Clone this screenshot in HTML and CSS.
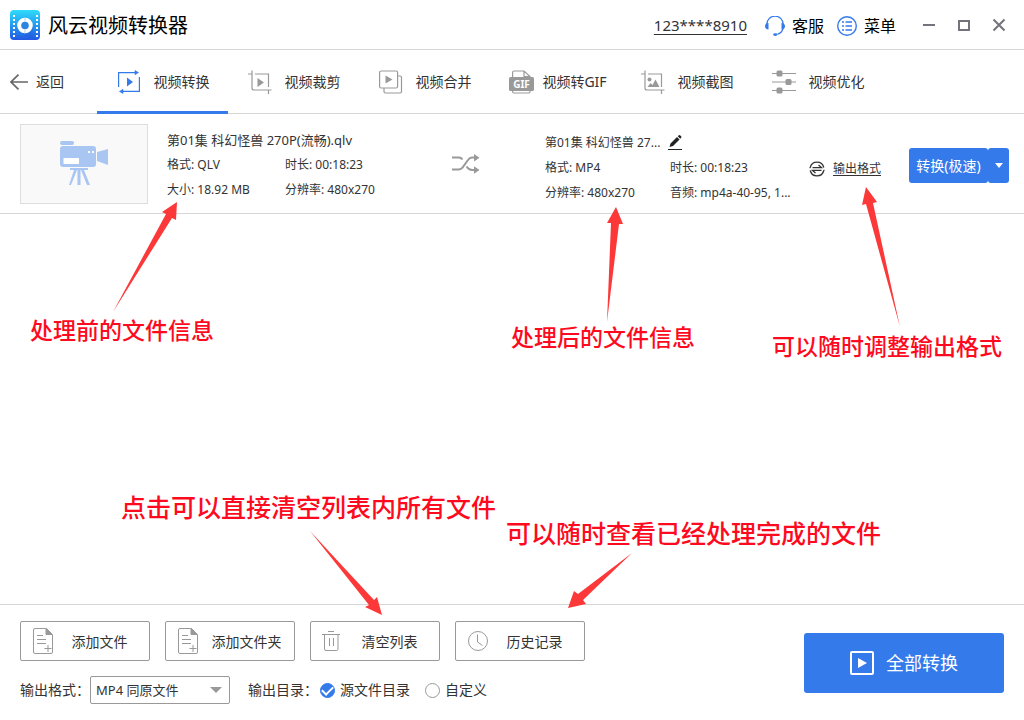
FILE: index.html
```html
<!DOCTYPE html>
<html lang="zh-CN">
<head>
<meta charset="utf-8">
<meta name="viewport" content="width=device-width, initial-scale=1">
<title>风云视频转换器</title>
<link rel="stylesheet" href="styles.css">
</head>
<body>
<div class="app">
  <header class="titlebar">
    <svg class="logo" width="30" height="30" viewBox="0 0 30 30" aria-hidden="true">
      <defs><linearGradient id="lg" x1="0" y1="0" x2="0" y2="1"><stop offset="0" stop-color="#2fdcfb"/><stop offset=".5" stop-color="#249bf0"/><stop offset="1" stop-color="#2358e2"/></linearGradient></defs>
      <rect width="30" height="30" rx="4" fill="url(#lg)"/>
      <path d="M4 5v22M27 5v22" stroke="#fff" stroke-width="2" stroke-dasharray="2 2" fill="none"/>
      <path d="M8 17l9 11h6V15z" fill="#1f5bd6" opacity=".35"/>
      <circle cx="15" cy="15.500" r="5.800" fill="#2a86e0" stroke="#fff" stroke-width="4"/>
      <path d="M15 7.500v4M15 19.500v4" stroke="#9fd2fa" stroke-width="1"/>
    </svg>
    <h1 class="brand">风云视频转换器</h1>
    <a class="phone" href="#">123****8910</a>
    <button class="head-btn" type="button">
      <svg width="20" height="20" viewBox="0 0 20 20" fill="none" stroke="#347aea" aria-hidden="true"><path d="M1.700 8.500a8.300 8.300 0 0 1 16.600 0M18 12.500c-.8 3-2.800 5-5.500 5.700" stroke-width="1.300"/><g fill="#347aea" stroke="none"><path d="M3.500 7v6.500Q0 13 0 10.200T3.500 7zM16.500 7v6.500q3.500-.5 3.500-3.300T16.500 7z"/><ellipse cx="10.300" cy="18.600" rx="2.200" ry="1.400"/></g></svg>
      客服</button>
    <button class="head-btn" type="button">
      <svg width="20" height="20" viewBox="0 0 20 20" fill="none" stroke="#347aea" aria-hidden="true"><circle cx="10" cy="10" r="9.300" stroke-width="1.400"/><path d="M5 6h2M8.500 6h6.500M5 10h2M8.500 10h6.500M5 14h2M8.500 14h6.500" stroke-width="1.700"/></svg>
      菜单</button>
    <div class="win-btns">
      <button type="button" aria-label="最小化"><svg width="14" height="14" viewBox="0 0 14 14"><path d="M1 7h12" stroke="#73737b" stroke-width="2"/></svg></button>
      <button type="button" aria-label="最大化"><svg width="14" height="14" viewBox="0 0 14 14"><rect x="2" y="3" width="10" height="9" fill="none" stroke="#73737b" stroke-width="2"/></svg></button>
      <button type="button" aria-label="关闭"><svg width="14" height="14" viewBox="0 0 14 14"><path d="M1.500 1.500l11 11M12.500 1.500l-11 11" stroke="#73737b" stroke-width="2"/></svg></button>
    </div>
  </header>

  <nav class="tabs">
    <button class="back" type="button"><svg width="18" height="16" viewBox="0 0 18 16" fill="none" stroke="#666" stroke-width="1.700" aria-hidden="true"><path d="M8.500 .7L1 8l7.500 7.300M1 8h17"/></svg>返回</button>
    <button class="tab active" type="button"><svg width="24" height="24" viewBox="0 0 24 24" fill="none" stroke="#347aea" stroke-width="1.200" aria-hidden="true"><path d="M1.600 17V2.600H18M22.400 7v14.400H6"/><path d="M18 .5l3.500 2.100L18 4.700zM6 19.300l-3.500 2.100L6 23.500z" fill="#347aea" stroke-width=".6"/><path d="M10 7.500v9l6-4.500z" fill="#347aea" stroke="none"/></svg>视频转换</button>
    <button class="tab" type="button"><svg width="24" height="24" viewBox="0 0 24 24" fill="none" stroke="#999" stroke-width="1.200" aria-hidden="true"><path d="M0 4h3.500M4 .5v17.500q0 2 2 2h17.500M7 4h13.500v13M20.500 20v4"/><path d="M9.500 8v9l6.500-4.500z" fill="#999" stroke="none"/></svg>视频裁剪</button>
    <button class="tab" type="button"><svg width="24" height="24" viewBox="0 0 24 24" fill="none" stroke="#999" stroke-width="1.200" aria-hidden="true"><rect x=".6" y="1" width="18" height="17" rx="1.500"/><path d="M19 6h2q1.500 0 1.500 1.500v14q0 1.500-1.500 1.500H6.500Q5 23 5 21.500V18"/><path d="M6.500 5.500v8l7-4z" fill="#999" stroke="none"/></svg>视频合并</button>
    <button class="tab tight" type="button"><svg width="25" height="24" viewBox="0 0 25 24" aria-hidden="true"><path d="M3.600 7V2.500Q3.600 1 5 1h10l6 5.500V8M15 1v5.500h6M3.600 19v2.500Q3.600 23 5 23h14.600q1.400 0 1.400-1.500V19" fill="none" stroke="#999" stroke-width="1.200"/><rect y="7" width="25" height="14" rx="1.500" fill="#999"/><text class="gif" x="12.500" y="18" text-anchor="middle">GIF</text></svg>视频转GIF</button>
    <button class="tab" type="button"><svg width="24" height="24" viewBox="0 0 24 24" fill="none" stroke="#999" stroke-width="1.200" aria-hidden="true"><path d="M0 4h3.500M4 .5v17.500q0 2 2 2h17.500M7 4h13.500v13M20.500 20v4"/><circle cx="8.500" cy="9.500" r="2" fill="#999" stroke="none"/><path d="M6.500 17l3-4 2 2 3-5.500 4 7.500z" fill="#999" stroke="none"/></svg>视频截图</button>
    <button class="tab" type="button"><svg width="24" height="24" viewBox="0 0 24 24" fill="none" stroke="#999" stroke-width="1.200" aria-hidden="true"><path d="M0 3.500h24M0 12h24M0 20.500h24"/><g fill="#999" stroke="none"><rect x="4.500" y=".5" width="6" height="6" rx="1.500"/><rect x="13.500" y="9" width="6" height="6" rx="1.500"/><rect x="4.500" y="17.500" width="6" height="6" rx="1.500"/></g></svg>视频优化</button>
  </nav>

  <main class="stage">
    <article class="file">
      <div class="thumb"><svg width="48" height="46" viewBox="0 0 48 46" fill="#a9c6f3" aria-hidden="true"><rect x="0" y="0" width="14" height="4" rx="2"/><rect x="0" y="5" width="36" height="21" rx="3"/><path d="M37 11l11-3v16l-11-4zM10 27h18v2H10zM17.500 29h3v15h-3zM14 29h3L11 44H9zM21 29h3l6 15h-3z"/><rect x="3.500" y="17" width="15.500" height="6" rx=".5" fill="#fff"/><path d="M28 10h2v2h-2zM32 10h2v2h-2z" fill="#fff"/></svg></div>
      <div class="info source">
        <h2 class="name">第01集 科幻怪兽 270P(流畅).qlv</h2>
        <span>格式: QLV</span><span>时长: 00:18:23</span>
        <span>大小: 18.92 MB</span><span>分辨率: 480x270</span>
      </div>
      <div class="shuffle"><svg width="28" height="20" viewBox="0 0 28 20" fill="none" stroke="#999" stroke-width="2" aria-hidden="true"><path d="M0 3.500h7q2 0 3.500 2M0 15.500h7q2 0 3.500-1.800L16 6q1.700-2.500 4-2.500h3M14.500 12.500Q17 16 20 16h3"/><path d="M22 0l5.500 3.700L22 7.400zM22 12.300l5.500 3.700L22 19.700z" fill="#999" stroke="none"/></svg></div>
      <div class="info target">
        <div class="name"><h2>第01集 科幻怪兽 27...</h2><button type="button" aria-label="重命名"><svg width="14" height="15" viewBox="0 0 14 15" aria-hidden="true"><path d="M0 14.500h14" stroke="#222"/><path d="M1.500 12l1-3.500L9 2l2.500 2.500L5 11zM9.800 1.200l1-1q.8-.4 1.500.3l.8.8q.7.7 0 1.400l-.9 1z" fill="#222"/></svg></button></div>
        <span>格式: MP4</span><span>时长: 00:18:23</span>
        <span>分辨率: 480x270</span><span>音频: mp4a-40-95, 1...</span>
      </div>
      <a class="output" href="#"><svg width="16" height="16" viewBox="0 0 16 16" fill="none" stroke="#333" stroke-width="1.300" aria-hidden="true"><path d="M1.200 6.500a7 7 0 0 1 13.600 0M14.800 9.500a7 7 0 0 1-13.600 0M3.500 6.600h9L9.500 4M.5 6.600h1M15.500 9.400h-1M12.500 9.400h-9l3 2.600"/></svg><span>输出格式</span></a>
      <div class="split"><button type="button">转换(极速)</button><button class="more" type="button" aria-label="更多"><svg width="8" height="5" viewBox="0 0 8 5"><path d="M0 0h8L4 5z" fill="#fff"/></svg></button></div>
    </article>
  </main>

  <footer class="footer">
    <div class="controls">
      <div class="actions">
        <button type="button"><svg width="22" height="28" viewBox="0 0 22 28" fill="none" stroke="#999" aria-hidden="true"><path d="M13.500 1.500H3q-1.500 0-1.500 1.500v22q0 1.500 1.500 1.500h16q1.500 0 1.500-1.500V8" /><path d="M14 1v6.500h6.500z" fill="#999"/><path d="M5 8.500h6M5 12.500h9M5 16.500h9M16 18v7M12.500 21.500h7"/></svg><span>添加文件</span></button>
        <button class="wide" type="button"><svg width="22" height="28" viewBox="0 0 22 28" fill="none" stroke="#999" aria-hidden="true"><path d="M13.500 1.500H3q-1.500 0-1.500 1.500v22q0 1.500 1.500 1.500h16q1.500 0 1.500-1.500V8" /><path d="M14 1v6.500h6.500z" fill="#999"/><path d="M5 8.500h6M5 12.500h9M5 16.500h9M16 18v7M12.500 21.500h7"/></svg><span>添加文件夹</span></button>
        <button type="button"><svg width="22" height="22" viewBox="0 0 22 22" fill="none" stroke="#999" aria-hidden="true"><path d="M6 1.500h6M0 4.500h18M2.500 5v14q0 1.500 1.500 1.500h10.500q1.500 0 1.500-1.500V5M7.500 8v8M11.500 8v8"/></svg><span>清空列表</span></button>
        <button type="button"><svg width="22" height="22" viewBox="0 0 22 22" fill="none" stroke="#999" aria-hidden="true"><circle cx="11" cy="11" r="9.500"/><path d="M10.500 4.500v7.500l5 3.500"/></svg><span>历史记录</span></button>
      </div>
      <div class="options">
        <label for="fmt">输出格式：</label>
        <div class="select"><select id="fmt"><option>MP4 同原文件</option></select><svg width="12" height="6" viewBox="0 0 12 6" aria-hidden="true"><path d="M0 0h12L6 6z" fill="#999"/></svg></div>
        <span class="dir">输出目录：</span>
        <label class="radio"><input type="radio" name="dir" checked>源文件目录</label>
        <label class="radio"><input type="radio" name="dir">自定义</label>
      </div>
    </div>
    <button class="convert-all" type="button"><svg width="24" height="24" viewBox="0 0 24 24" aria-hidden="true"><rect x="1" y="1" width="22" height="22" rx="1" fill="none" stroke="#fff" stroke-width="2"/><path d="M8 7v10l9-5z" fill="#fff"/></svg>全部转换</button>
  </footer>

  <div class="notes">
    <svg class="arrows" aria-hidden="true"><g fill="#fc3838">
      <path d="M113 312L166 214 162 212 177 202 176 220 172 218z"/>
      <path d="M607 322L611 223 607 223 616 207 623 224 619 224z"/>
      <path d="M900 327L866 204 862 205 866 187 877 202 873 203z"/>
      <path d="M310 531L369 605 365 607 382 615 377 597 374 600z"/>
      <path d="M632 553L578 594 574 591 568 608 586 604 583 600z"/>
    </g></svg>
    <p class="note n1">处理前的文件信息</p>
    <p class="note n2">处理后的文件信息</p>
    <p class="note n3">可以随时调整输出格式</p>
    <p class="note large n4">点击可以直接清空列表内所有文件</p>
    <p class="note large n5">可以随时查看已经处理完成的文件</p>
  </div>
</div>
</body>
</html>
```
FILE: styles.css
```css
* { box-sizing: border-box; }
body, h1, h2, p { margin: 0; font-weight: 400; }
body, button, select {
  font-family: "Noto Sans", "Noto Sans CJK SC", sans-serif;
  font-size: 14px;
  line-height: 20px;
  color: #333;
}
button { border: 0; padding: 0; background: none; cursor: pointer; white-space: nowrap; }
svg { display: block; flex: none; }

.app { position: relative; display: flex; flex-direction: column; min-height: 100vh; background: #fff; }

.titlebar { display: flex; align-items: center; height: 50px; padding: 0 18px 0 10px; border-bottom: 1px solid #d6d6d6; }
.brand { margin-left: 8px; margin-right: auto; padding-top: 2px; font-size: 20px; line-height: 30px; color: #000; }
.phone { margin-right: 18px; font-size: 15px; color: #333; text-underline-offset: 3px; }
.head-btn { display: flex; align-items: center; gap: 7px; margin-right: 13px; padding-top: 2px; font-size: 16px; color: #000; }
.win-btns { display: flex; gap: 21px; margin-left: 13px; }

.tabs { display: flex; height: 64px; border-bottom: 1px solid #d6d6d6; }
.back { display: flex; align-items: center; gap: 8px; width: 97px; padding-left: 10px; }
.tab { display: flex; align-items: center; justify-content: center; gap: 13px; width: 131px; height: 64px; padding: 2px 0 0 1px; border-bottom: 3px solid transparent; }
.tab.tight { gap: 8px; padding-left: 5px; }
.tab.active { border-bottom-color: #347aea; }
.gif { font: 700 10px "Noto Sans", sans-serif; fill: #fff; }

.stage { flex: 1; }
.file { display: grid; grid-template-columns: 128px minmax(0, 304fr) minmax(0, 93fr) 264px 100px 100px; align-items: center; height: 100px; padding: 0 15px 0 20px; border-bottom: 1px solid #d6d6d6; }
.thumb { display: grid; place-items: center; height: 80px; border: 1px solid #ddd; background: #f9f9f9; }
.info { display: grid; grid-auto-rows: 25px; align-items: center; font-size: 12px; white-space: nowrap; }
.source { grid-template-columns: 118px 1fr; padding-top: 3px; padding-left: 19px; }
.target { grid-template-columns: 125px 1fr; padding-top: 8px; }
.name { grid-column: 1 / -1; }
.source .name { font-size: 13px; }
.target .name { display: flex; align-items: center; gap: 8px; }
.target h2 { font-size: 12px; }
.output { display: flex; align-items: center; gap: 8px; padding-top: 10px; font-size: 12px; color: #333; text-underline-offset: 2px; }
.split { display: flex; padding-top: 4px; }
.split button { width: 79px; height: 35px; border-radius: 3px; background: #347aea; color: #fff; }
.split .more { display: grid; place-items: center; width: 21px; }

.footer { display: flex; align-items: center; justify-content: space-between; padding: 16px 20px; border-top: 1px solid #d6d6d6; }
.actions { display: flex; gap: 15px; }
.actions button { display: flex; align-items: center; width: 130px; height: 40px; padding: 0 4px 0 11px; border: 1px solid #999; border-radius: 2px; }
.actions .wide { padding-right: 0; }
.actions span { flex: 1; padding-top: 2px; text-align: center; }
.options { display: flex; align-items: center; margin-top: 15px; }
.select { display: grid; align-items: center; width: 140px; margin-right: 18px; }
.select select { grid-area: 1 / 1; appearance: none; height: 28px; padding: 0 28px 0 5px; border: 1px solid #999; border-radius: 2px; background: #fff; font-size: 13px; }
.select svg { grid-area: 1 / 1; justify-self: end; margin-right: 8px; pointer-events: none; }
.dir { margin-right: 2px; }
.radio { display: flex; align-items: center; gap: 5px; margin-right: 15px; }
.radio input { appearance: none; display: grid; place-items: center; width: 15px; height: 15px; margin: 0; border: 1px solid #999; border-radius: 50%; }
.radio input:checked { border-color: #347aea; background: #347aea; }
.radio input:checked::after { content: ""; width: 9px; height: 5px; border: solid #fff; border-width: 0 0 2px 2px; transform: translateY(-1px) rotate(-45deg); }
.convert-all { display: flex; align-items: center; justify-content: center; gap: 12px; width: 200px; height: 60px; border-radius: 3px; background: #347aea; color: #fff; font-size: 18px; }

/* Help callouts drawn over the window */
.notes { position: absolute; inset: 0; pointer-events: none; }
.arrows { width: 100%; height: 100%; }
.note { position: absolute; font-size: 23px; line-height: 30px; font-weight: 500; color: #fe0a20; white-space: nowrap; }
.note.large { font-size: 25px; }
.n1 { left: 30px; top: 315px; }
.n2 { left: 511px; top: 322px; }
.n3 { left: 772px; top: 331px; }
.n4 { left: 121px; top: 492px; }
.n5 { left: 506px; top: 518px; }
```
